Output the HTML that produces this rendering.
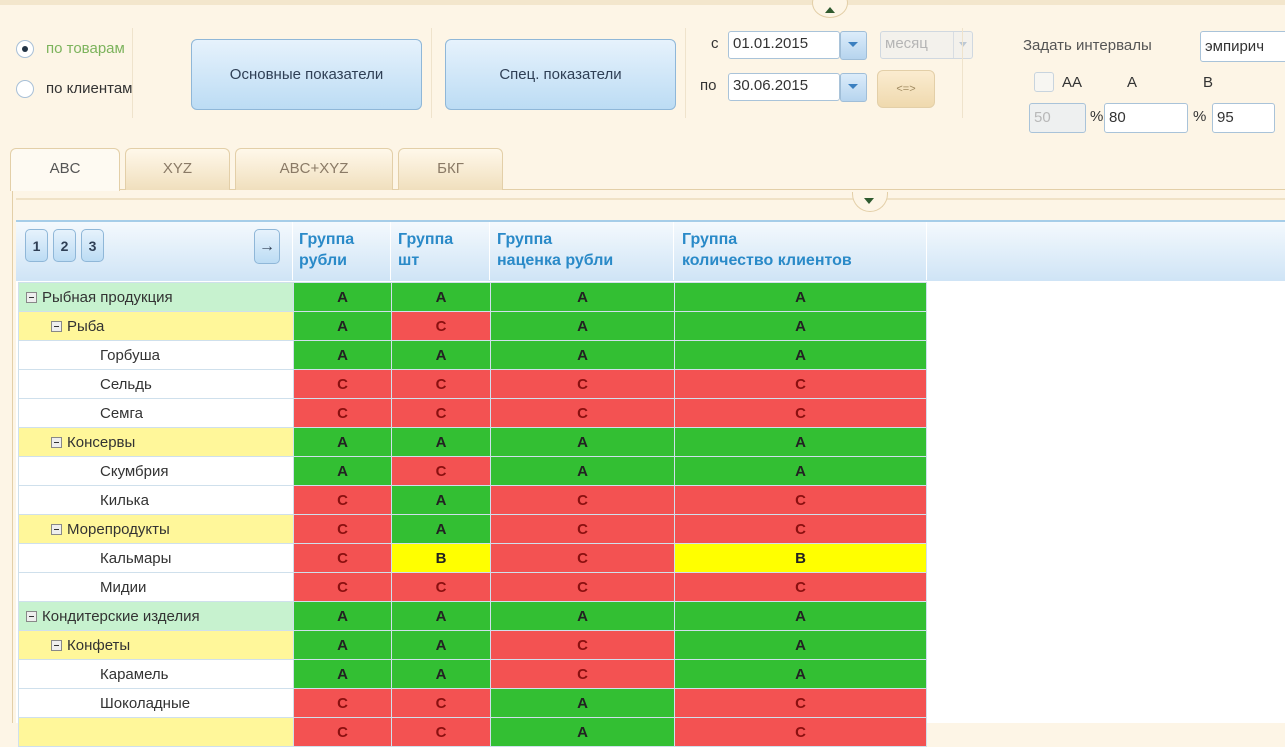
<!DOCTYPE html>
<html><head><meta charset="utf-8"><style>
*{box-sizing:border-box;margin:0;padding:0}
body{width:1285px;height:723px;overflow:hidden;background:#fdf5e6;font-family:"Liberation Sans",sans-serif;position:relative;font-size:14px;color:#333}
.a{position:absolute}
.btn{background:linear-gradient(#e6f2fc,#bcdcf4);border:1px solid #8fb7d8;border-radius:6px;color:#2f3f55;font-size:15px;display:flex;align-items:center;justify-content:center}
.inp{background:#fff;border:1px solid #a9c3d9;border-radius:3px;font-size:15px;padding-left:4px;line-height:24px;color:#333}
.dd{background:linear-gradient(#dcecfa,#b6d4ee);border:1px solid #a0bed8;border-radius:3px}
.dd:after{content:"";position:absolute;left:7px;top:10px;border:5px solid transparent;border-top:5px solid #3a7fc0}
.tab{top:148px;height:42px;border:1px solid #e3cfa8;border-bottom:none;border-radius:6px 6px 0 0;background:linear-gradient(#fff8ea,#f0dfbd);color:#8a7a66;font-size:15px;text-align:center;line-height:40px}
table{border-collapse:collapse;position:absolute;left:18px;top:282px}
td{height:29px;border:1px solid #cfe0ec;font-size:15px;padding:0}
td.l{width:275px;background:#fff;color:#333}
td.g{background:#33bf33}td.r{background:#f35252}td.y{background:#ffff00}
td.c{text-align:center;font-weight:bold;color:#222}
td.c.r{color:#8a1010}
.L0{background:#c7f2cf!important}.L1{background:#fff79a!important}
.m{display:inline-block;width:11px;height:11px;border:1px solid #888;background:#eee;vertical-align:-1px;margin-right:5px;position:relative}
.m:after{content:"";position:absolute;left:2px;top:4px;width:5px;height:1px;background:#333}
.w1{width:98px}.w2{width:99px}.w3{width:184px}.w4{width:252px}
.hd{color:#2a8ac8;font-weight:bold;font-size:16px;line-height:21px}
</style></head><body>
<div class="a" style="left:0;top:0;width:1285px;height:5px;background:#f3e6cc"></div>
<div class="a" style="left:812px;top:-12px;width:36px;height:30px;border-radius:50%;background:#fdf5e6;border:1px solid #e3cfa8"></div>
<div class="a" style="left:825px;top:7px;border:5px solid transparent;border-bottom:6px solid #2f5a2f;border-top:none"></div>
<!-- radios -->
<div class="a" style="left:16px;top:40px;width:18px;height:18px;border-radius:50%;border:1px solid #a8c0d8;background:#fff"></div>
<div class="a" style="left:22px;top:46px;width:6px;height:6px;border-radius:50%;background:#234"></div>
<div class="a" style="left:46px;top:40px;color:#7cb35c;font-size:15px">по товарам</div>
<div class="a" style="left:16px;top:80px;width:18px;height:18px;border-radius:50%;border:1px solid #a8c0d8;background:#fff"></div>
<div class="a" style="left:46px;top:80px;color:#333;font-size:15px">по клиентам</div>
<div class="a" style="left:132px;top:28px;width:1px;height:90px;background:#efe3cc"></div>
<div class="a btn" style="left:191px;top:39px;width:231px;height:71px">Основные показатели</div>
<div class="a" style="left:431px;top:28px;width:1px;height:90px;background:#efe3cc"></div>
<div class="a btn" style="left:445px;top:39px;width:231px;height:71px">Спец. показатели</div>
<div class="a" style="left:685px;top:28px;width:1px;height:90px;background:#efe3cc"></div>
<div class="a" style="left:711px;top:35px;font-size:15px">с</div>
<div class="a inp" style="left:728px;top:31px;width:112px;height:28px">01.01.2015</div>
<div class="a dd" style="left:840px;top:31px;width:27px;height:29px"></div>
<div class="a inp" style="left:852px;top:31px;width:0;height:0;border:none"></div>
<div class="a" style="left:852px;top:31px;width:0"></div>
<div class="a inp" style="left:852px;top:31px;display:none"></div>
<div class="a" style="left:851px;top:0"></div>
<div class="a inp" style="left:851px;top:31px;width:0;display:none"></div>
<div class="a" style="left:851px;top:31px"></div>
<div class="a inp" style="left:880px;top:31px;width:93px;height:28px;background:#f3f1ec;color:#b5b5b5;border-color:#d0d8e0">месяц</div>
<div class="a" style="left:953px;top:32px;width:20px;height:26px;border-left:1px solid #d8dde2"></div>
<div class="a" style="left:959px;top:42px;border:4px solid transparent;border-top:5px solid #bcc8d4"></div>
<div class="a" style="left:700px;top:77px;font-size:15px">по</div>
<div class="a inp" style="left:728px;top:73px;width:112px;height:28px">30.06.2015</div>
<div class="a dd" style="left:840px;top:73px;width:27px;height:29px"></div>
<div class="a" style="left:877px;top:70px;width:58px;height:38px;border-radius:6px;background:linear-gradient(#fbecd0,#efd9ae);border:1px solid #e3cfa8;color:#a08a60;font-size:11px;text-align:center;line-height:36px">&lt;=&gt;</div>
<div class="a" style="left:962px;top:28px;width:1px;height:90px;background:#efe3cc"></div>
<div class="a" style="left:1023px;top:37px;font-size:15px;color:#555">Задать интервалы</div>
<div class="a inp" style="left:1200px;top:31px;width:100px;height:31px;line-height:29px">эмпирич</div>
<div class="a" style="left:1034px;top:72px;width:20px;height:20px;border:1px solid #c8d4de;border-radius:3px;background:#f7f6f2"></div>
<div class="a" style="left:1062px;top:74px;font-size:15px">AA</div>
<div class="a" style="left:1127px;top:74px;font-size:15px">A</div>
<div class="a" style="left:1203px;top:74px;font-size:15px">B</div>
<div class="a inp" style="left:1029px;top:103px;width:57px;height:30px;line-height:28px;background:#eef0f0;color:#b8b8b8">50</div>
<div class="a" style="left:1090px;top:108px;font-size:15px">%</div>
<div class="a inp" style="left:1104px;top:103px;width:84px;height:30px;line-height:28px">80</div>
<div class="a" style="left:1193px;top:108px;font-size:15px">%</div>
<div class="a inp" style="left:1212px;top:103px;width:63px;height:30px;line-height:28px">95</div>
<!-- tabs -->
<div class="a" style="left:12px;top:189px;width:1273px;height:534px;border-left:1px solid #e3cfa8;border-top:1px solid #e3cfa8;background:#fdf5e6"></div>
<div class="a tab" style="left:10px;width:110px;background:#fefaf2;color:#555;height:43px">ABC</div>
<div class="a tab" style="left:125px;width:105px">XYZ</div>
<div class="a tab" style="left:235px;width:158px">ABC+XYZ</div>
<div class="a tab" style="left:398px;width:105px">БКГ</div>
<div class="a" style="left:16px;top:198px;width:1269px;height:2px;background:#f0e2c6"></div>
<div class="a" style="left:852px;top:192px;width:36px;height:20px;border-radius:0 0 18px 18px;background:#fdf5e6;border:1px solid #e3cfa8;border-top:none"></div>
<div class="a" style="left:864px;top:198px;border:5px solid transparent;border-top:6px solid #2f5a2f;border-bottom:none"></div>
<!-- header -->
<div class="a" style="left:16px;top:220px;width:1269px;height:61px;background:linear-gradient(#f4f9fd,#cfe4f6);border-top:2px solid #a6cde8"></div>
<div class="a btn" style="left:25px;top:229px;width:23px;height:33px;border-radius:5px;font-size:14px;font-weight:bold">1</div>
<div class="a btn" style="left:53px;top:229px;width:23px;height:33px;border-radius:5px;font-size:14px;font-weight:bold">2</div>
<div class="a btn" style="left:81px;top:229px;width:23px;height:33px;border-radius:5px;font-size:14px;font-weight:bold">3</div>
<div class="a btn" style="left:254px;top:229px;width:26px;height:35px;border-radius:5px;font-size:16px">→</div>
<div class="a" style="left:292px;top:222px;width:1px;height:58px;background:#fff"></div>
<div class="a hd" style="left:299px;top:229px">Группа<br>рубли</div>
<div class="a" style="left:390px;top:222px;width:1px;height:58px;background:#fff"></div>
<div class="a hd" style="left:398px;top:229px">Группа<br>шт</div>
<div class="a" style="left:489px;top:222px;width:1px;height:58px;background:#fff"></div>
<div class="a hd" style="left:497px;top:229px">Группа<br>наценка рубли</div>
<div class="a" style="left:673px;top:222px;width:1px;height:58px;background:#fff"></div>
<div class="a hd" style="left:682px;top:229px">Группа<br>количество клиентов</div>
<div class="a" style="left:926px;top:222px;width:1px;height:58px;background:#fff"></div>
<div class="a" style="left:927px;top:281px;width:358px;height:442px;background:#fff"></div>
<div class="a" style="left:16px;top:281px;width:911px;height:442px;background:#fff"></div>
<table>
<tr><td class="l L0"><span style="margin-left:7px" class="m"></span>Рыбная продукция</td><td class="c g w1">A</td><td class="c g w2">A</td><td class="c g w3">A</td><td class="c g w4">A</td></tr>
<tr><td class="l L1"><span style="margin-left:32px" class="m"></span>Рыба</td><td class="c g">A</td><td class="c r">C</td><td class="c g">A</td><td class="c g">A</td></tr>
<tr><td class="l"><span style="margin-left:81px">Горбуша</span></td><td class="c g">A</td><td class="c g">A</td><td class="c g">A</td><td class="c g">A</td></tr>
<tr><td class="l"><span style="margin-left:81px">Сельдь</span></td><td class="c r">C</td><td class="c r">C</td><td class="c r">C</td><td class="c r">C</td></tr>
<tr><td class="l"><span style="margin-left:81px">Семга</span></td><td class="c r">C</td><td class="c r">C</td><td class="c r">C</td><td class="c r">C</td></tr>
<tr><td class="l L1"><span style="margin-left:32px" class="m"></span>Консервы</td><td class="c g">A</td><td class="c g">A</td><td class="c g">A</td><td class="c g">A</td></tr>
<tr><td class="l"><span style="margin-left:81px">Скумбрия</span></td><td class="c g">A</td><td class="c r">C</td><td class="c g">A</td><td class="c g">A</td></tr>
<tr><td class="l"><span style="margin-left:81px">Килька</span></td><td class="c r">C</td><td class="c g">A</td><td class="c r">C</td><td class="c r">C</td></tr>
<tr><td class="l L1"><span style="margin-left:32px" class="m"></span>Морепродукты</td><td class="c r">C</td><td class="c g">A</td><td class="c r">C</td><td class="c r">C</td></tr>
<tr><td class="l"><span style="margin-left:81px">Кальмары</span></td><td class="c r">C</td><td class="c y">B</td><td class="c r">C</td><td class="c y">B</td></tr>
<tr><td class="l"><span style="margin-left:81px">Мидии</span></td><td class="c r">C</td><td class="c r">C</td><td class="c r">C</td><td class="c r">C</td></tr>
<tr><td class="l L0"><span style="margin-left:7px" class="m"></span>Кондитерские изделия</td><td class="c g">A</td><td class="c g">A</td><td class="c g">A</td><td class="c g">A</td></tr>
<tr><td class="l L1"><span style="margin-left:32px" class="m"></span>Конфеты</td><td class="c g">A</td><td class="c g">A</td><td class="c r">C</td><td class="c g">A</td></tr>
<tr><td class="l"><span style="margin-left:81px">Карамель</span></td><td class="c g">A</td><td class="c g">A</td><td class="c r">C</td><td class="c g">A</td></tr>
<tr><td class="l"><span style="margin-left:81px">Шоколадные</span></td><td class="c r">C</td><td class="c r">C</td><td class="c g">A</td><td class="c r">C</td></tr>
<tr><td class="l L1"></td><td class="c r">C</td><td class="c r">C</td><td class="c g">A</td><td class="c r">C</td></tr>
</table>
</body></html>
